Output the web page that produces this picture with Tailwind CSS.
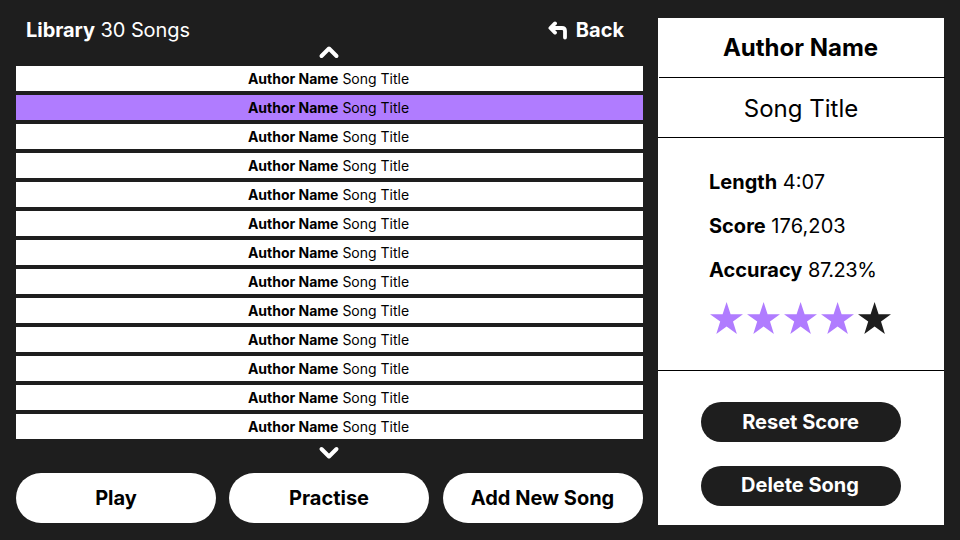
<!DOCTYPE html>
<html lang="en">
<head>
<meta charset="utf-8">
<title>Library</title>
<script src="https://cdn.jsdelivr.net/npm/@tailwindcss/browser@4"></script>
</head>
<body class="bg-[#1e1e1e]">
<main class="flex h-[540px] w-[960px] overflow-hidden bg-[#1e1e1e] pl-4 pr-4 font-['Inter',sans-serif] text-black">
  <section class="flex w-[627px] flex-col">
    <header class="flex h-[42px] items-end justify-between pl-2.5 pr-[19px] text-xl leading-6 text-white">
      <h1><b class="font-bold tracking-[-0.05px]">Library</b> <span class="tracking-[-0.1px]">30 Songs</span></h1>
      <button class="flex items-center gap-2 font-bold">
        <svg class="h-5 w-5" viewBox="0 0 20 20" fill="none" stroke="#fff" stroke-width="3.8" stroke-linecap="round" stroke-linejoin="round"><path d="M7 3.4 2.4 8 7 12.6M3 8H14Q17 8 17 11V17.6"/></svg>
        Back
      </button>
    </header>
    <div class="flex h-6 justify-center pt-0.5 pr-px">
      <svg class="h-4 w-6" viewBox="0 0 24 16" fill="none" stroke="#fff" stroke-width="4" stroke-linecap="round" stroke-linejoin="round"><path d="M4.5 12 12 4.5 19.5 12"/></svg>
    </div>
    <ul id="songs" class="flex flex-col gap-1"></ul>
    <div class="flex h-[34px] justify-center pt-1.5 pr-px">
      <svg class="h-4 w-6" viewBox="0 0 24 16" fill="none" stroke="#fff" stroke-width="4" stroke-linecap="round" stroke-linejoin="round"><path d="M4.5 4 12 11.5 19.5 4"/></svg>
    </div>
    <div class="grid grid-cols-[213px_214px_200px] text-xl font-bold">
      <button class="h-[50px] w-[200px] rounded-full bg-white">Play</button>
      <button class="h-[50px] w-[200px] rounded-full bg-white">Practise</button>
      <button class="h-[50px] w-[200px] rounded-full bg-white pr-px">Add New Song</button>
    </div>
  </section>

  <aside class="ml-[15px] mt-[18px] flex h-[507px] w-[286px] flex-col bg-white">
    <h2 class="flex h-[59px] items-center justify-center pr-px text-2xl font-bold">Author Name</h2>
    <div class="-mr-px ml-px h-px bg-black"></div>
    <h3 class="flex h-[60px] items-center justify-center border-b border-black pt-0.5 text-2xl">Song Title</h3>
    <div class="h-[233px] border-b border-black pl-[51px] pt-8 text-xl leading-6">
      <p><b class="font-bold">Length</b> 4:07</p>
      <p class="mt-5"><b class="font-bold">Score</b> <span class="tracking-[0.1px]">176,203</span></p>
      <p class="mt-5"><b class="font-bold">Accuracy</b> <span class="tracking-[-0.45px]">87.23%</span></p>
      <div id="stars" class="mt-5 flex gap-[3px]"></div>
    </div>
    <div class="flex flex-col items-center gap-6 pt-[31px] text-xl font-bold text-white">
      <button class="h-10 w-[200px] rounded-full bg-[#1e1e1e] pr-px">Reset Score</button>
      <button class="h-10 w-[200px] rounded-full bg-[#1e1e1e] pr-0.5 pb-0.5">Delete Song</button>
    </div>
  </aside>
</main>
<script>
  const selected = 1;
  document.getElementById('songs').innerHTML = Array.from({ length: 13 }, (_, i) =>
    `<li class="h-[25px] pr-0.5 text-center text-sm leading-[25px] ${i === selected ? 'bg-[#b07cff]' : 'bg-white'}"><b class="font-bold">Author Name</b> Song Title</li>`
  ).join('');
  document.getElementById('stars').innerHTML = Array.from({ length: 5 }, (_, i) =>
    `<svg class="h-[34px] w-[34px] ${i < 4 ? 'fill-[#b07cff]' : 'fill-[#1e1e1e]'}" viewBox="0 0 34 34"><path d="M17.6 0 21.6 12.2H34.2L24 19.5 27.9 32 17.6 24.4 7.3 32 11.2 19.5 1 12.2H13.6Z"/></svg>`
  ).join('');
</script>
</body>
</html>
